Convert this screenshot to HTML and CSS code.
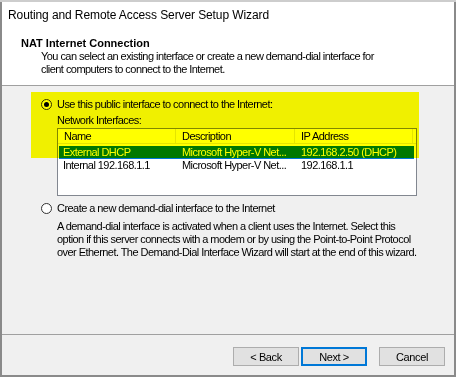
FILE: index.html
```html
<!DOCTYPE html>
<html>
<head>
<meta charset="utf-8">
<link rel="stylesheet" href="styles.css">
</head>
<body>
<div class="strip"></div>
<div class="window">
  <div class="caption">Routing and Remote Access Server Setup Wizard</div>
  <div class="header">
    <div class="h-title">NAT Internet Connection</div>
    <div class="h-sub">You can select an existing interface or create a new demand-dial interface for<br>client computers to connect to the Internet.</div>
  </div>
  <div class="body">
    <div class="option first">
      <span class="radio checked"></span>
      <span class="label">Use this public interface to connect to the Internet:</span>
    </div>
    <div class="sublabel">Network Interfaces:</div>
    <div class="listview">
      <div class="lv-head">
        <span class="col c1">Name</span>
        <span class="col c2">Description</span>
        <span class="col c3">IP Address</span>
      </div>
      <div class="lv-rows">
        <div class="lv-row selected">
          <span class="cell c1">External DHCP</span>
          <span class="cell c2">Microsoft Hyper-V Net...</span>
          <span class="cell c3">192.168.2.50 (DHCP)</span>
        </div>
        <div class="lv-row">
          <span class="cell c1">Internal 192.168.1.1</span>
          <span class="cell c2">Microsoft Hyper-V Net...</span>
          <span class="cell c3">192.168.1.1</span>
        </div>
      </div>
    </div>
    <div class="option second">
      <span class="radio"></span>
      <span class="label">Create a new demand-dial interface to the Internet</span>
    </div>
    <p class="desc">A demand-dial interface is activated when a client uses the Internet. Select this<br>option if this server connects with a modem or by using the Point-to-Point Protocol<br>over Ethernet. The Demand-Dial Interface Wizard will start at the end of this wizard.</p>
  </div>
  <div class="footer">
    <button class="btn back">&lt; Back</button>
    <button class="btn next">Next &gt;</button>
    <button class="btn cancel">Cancel</button>
  </div>
  <div class="highlight"></div>
</div>
</body>
</html>
```

FILE: styles.css
```css
html, body {
  margin: 0;
  padding: 0;
  background: #ffffff;
}
body {
  font-family: "Liberation Sans", Arial, sans-serif;
  font-size: 11px;
  letter-spacing: -0.55px;
  color: #000;
  width: 456px;
  height: 377px;
  overflow: hidden;
}
.strip {
  height: 2px;
  background: #cdcdcd;
}
.window {
  position: relative;
  box-sizing: border-box;
  height: 375px;
  border-left: 2px solid #8a8a8a;
  border-right: 2px solid #8a8a8a;
  border-bottom: 2px solid #8a8a8a;
  display: flex;
  flex-direction: column;
  background: #f0f0f0;
}
.caption {
  height: 28px;
  box-sizing: border-box;
  padding: 6px 0 0 6px;
  font-size: 12px;
  letter-spacing: -0.1px;
  line-height: 15px;
  background: #fff;
}
.header {
  background: #fff;
  height: 56px;
  box-sizing: border-box;
  padding: 7px 0 0 19px;
  border-bottom: 1px solid #a0a0a0;
  line-height: 13px;
}
.h-title {
  font-weight: bold;
  letter-spacing: 0;
}
.h-sub {
  padding-left: 20px;
}
.body {
  height: 248px;
  box-sizing: border-box;
  padding-top: 12px;
  line-height: 13px;
}
.option {
  display: flex;
  align-items: center;
  gap: 5px;
  margin-left: 39px;
  height: 13px;
}
.radio {
  width: 11px;
  height: 11px;
  box-sizing: border-box;
  border: 1px solid #333;
  border-radius: 50%;
  background: #fff;
  display: flex;
  align-items: center;
  justify-content: center;
}
.radio.checked::after {
  content: "";
  width: 5px;
  height: 5px;
  border-radius: 50%;
  background: #000;
}
.sublabel {
  margin: 3px 0 0 55px;
}
.listview {
  margin: 1px 0 0 55px;
  width: 360px;
  height: 68px;
  box-sizing: border-box;
  border: 1px solid #828790;
  background: #fff;
}
.lv-head {
  display: flex;
  height: 15px;
  box-sizing: border-box;
  border-bottom: 1px solid #e5e5e5;
}
.col {
  box-sizing: border-box;
  padding-left: 6px;
  border-right: 1px solid #e5e5e5;
  line-height: 14px;
}
.c1 { width: 118px; }
.c2 { width: 119px; }
.c3 { width: 118px; }
.lv-rows {
  padding: 2px 0 0 1px;
}
.lv-row {
  display: flex;
  height: 13px;
  line-height: 13px;
  width: 355px;
}
.cell {
  box-sizing: border-box;
  padding-left: 6px;
  white-space: nowrap;
  overflow: hidden;
}
.cell.c1 { width: 117px; padding-left: 4px; }
.lv-row.selected {
  background: #0078d7;
  color: #fff;
}
.option.second {
  margin-top: 6px;
}
.desc {
  margin: 5px 0 0 55px;
}
.footer {
  flex: 1;
  border-top: 1px solid #a0a0a0;
  display: flex;
  justify-content: flex-end;
  align-items: flex-start;
  padding: 12px 9px 0 0;
}
.btn {
  width: 66px;
  height: 19px;
  box-sizing: border-box;
  font-family: "Liberation Sans", Arial, sans-serif;
  font-size: 11px;
  letter-spacing: -0.4px;
  color: #000;
  background: #e1e1e1;
  border: 1px solid #adadad;
  padding: 0;
  margin: 0;
}
.btn.next {
  margin-left: 2px;
  border-color: #0078d7;
  box-shadow: inset 0 0 0 1px #0078d7;
}
.btn.cancel {
  margin-left: 12px;
}
.highlight {
  position: absolute;
  left: 29px;
  top: 90px;
  width: 388px;
  height: 66px;
  background: #ffff00;
  mix-blend-mode: multiply;
  pointer-events: none;
}
```
